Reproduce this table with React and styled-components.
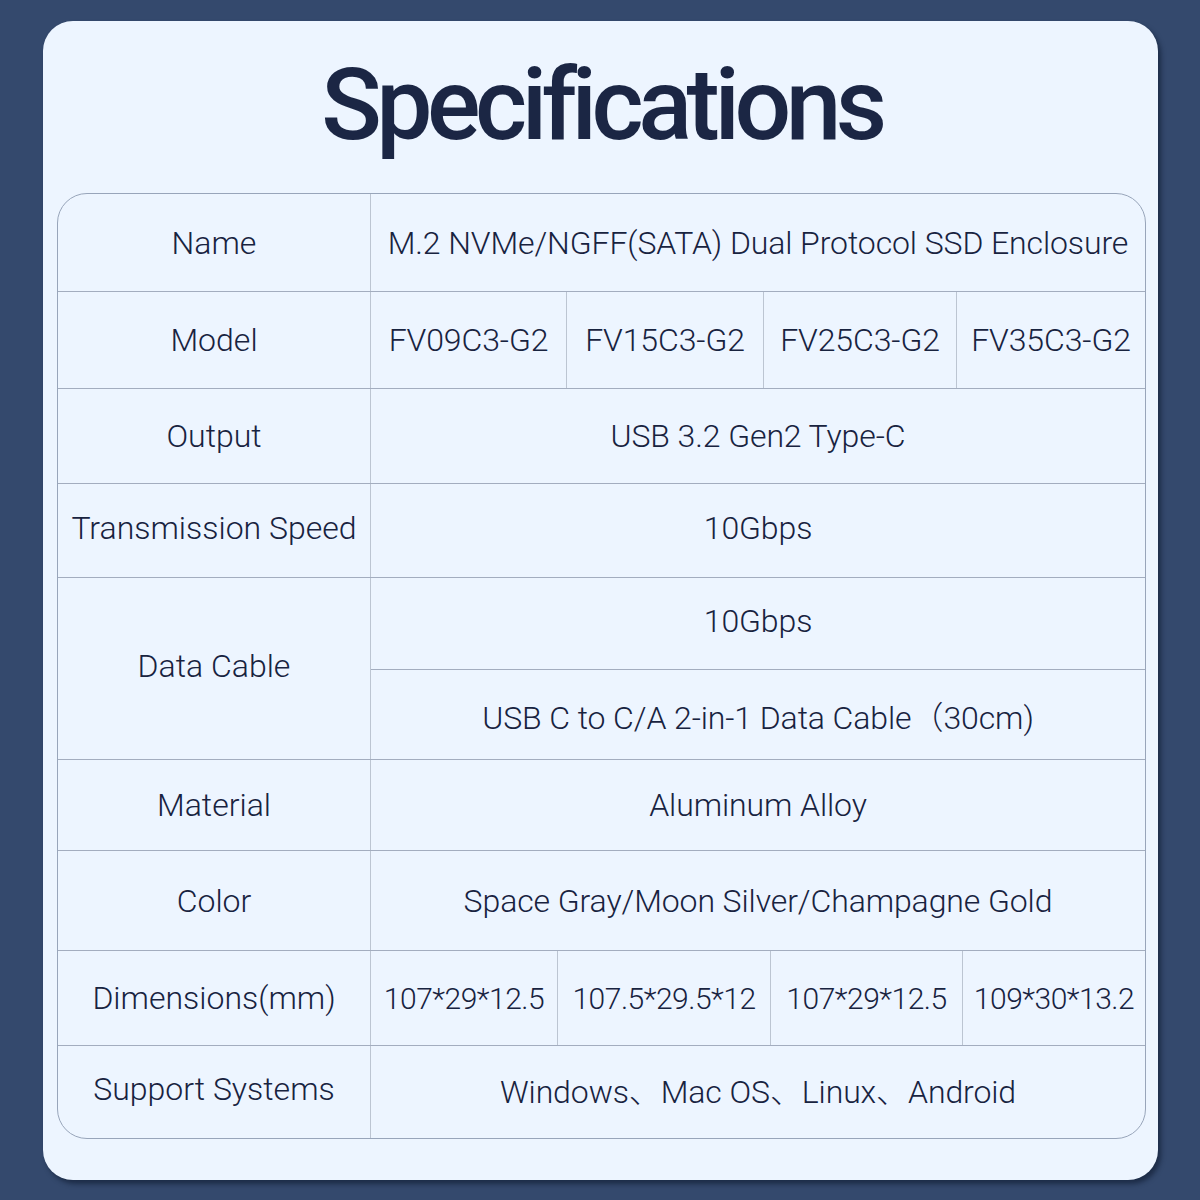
import React from "react";
import styled, { createGlobalStyle } from "styled-components";

const GlobalStyle = createGlobalStyle`
  html, body {
    margin: 0;
    padding: 0;
    background: #34496d;
  }
  body {
    font-family: Roboto, "Noto Sans", "Noto Sans CJK SC", sans-serif;
    color: #1c2747;
  }
`;

const Page = styled.div`
  width: 1200px;
  height: 1200px;
  padding: 21px 42px 20px 43px;
  box-sizing: border-box;
  background: #34496d;
`;

const Card = styled.div`
  height: 100%;
  background: #edf5ff;
  border-radius: 30px;
  box-shadow: 3px 4px 5px rgba(10, 20, 40, 0.55);
  padding: 0 12px 0 14px;
  box-sizing: border-box;
  display: flex;
  flex-direction: column;
`;

const Title = styled.h1`
  margin: 0;
  height: 172px;
  display: flex;
  align-items: center;
  justify-content: center;
  font-size: 100px;
  font-weight: 500;
  letter-spacing: -5.5px;
  color: #1b2644;
  padding-bottom: 6px;
  box-sizing: border-box;
`;

const Table = styled.div`
  border: 1px solid #98a5ba;
  border-radius: 30px;
  overflow: hidden;
  display: flex;
  flex-direction: column;
`;

const Row = styled.div`
  display: flex;
  height: ${(p) => p.h}px;
  border-bottom: ${(p) => (p.last ? "none" : "1.5px solid #a3adbf")};
  box-sizing: border-box;
`;

const Label = styled.div`
  width: 313px;
  flex-shrink: 0;
  display: flex;
  align-items: center;
  justify-content: center;
  padding-bottom: ${(p) => (p.lift ? "6px" : "0")};
  box-sizing: border-box;
  font-size: 32px;
  font-weight: 300;
  color: #18233f;
  border-right: 1px solid #bcc5d2;
  white-space: nowrap;
`;

const Values = styled.div`
  flex: 1;
  display: flex;
  flex-direction: ${(p) => (p.stack ? "column" : "row")};
`;

const Cell = styled.div`
  width: ${(p) => (p.w ? `${p.w}px` : "auto")};
  flex: ${(p) => (p.w ? "none" : p.grow || 1)};
  display: flex;
  align-items: center;
  justify-content: center;
  padding-bottom: ${(p) => (p.lift ? "6px" : "0")};
  font-size: ${(p) => (p.compact ? "30px" : "32px")};
  letter-spacing: ${(p) => (p.compact ? "-0.5px" : "-0.1px")};
  font-weight: 300;
  color: #18233f;
  white-space: nowrap;
  box-sizing: border-box;
  border-right: ${(p) => (p.divider ? "1.5px solid #bcc5d2" : "none")};
  border-bottom: ${(p) => (p.under ? "1.5px solid #a3adbf" : "none")};
`;

const rows = [
  { label: "Name", h: 98, values: ["M.2 NVMe/NGFF(SATA) Dual Protocol SSD Enclosure"] },
  {
    label: "Model",
    h: 97,
    values: ["FV09C3-G2", "FV15C3-G2", "FV25C3-G2", "FV35C3-G2"],
    widths: [196, 197, 193, null],
  },
  { label: "Output", h: 95, values: ["USB 3.2 Gen2 Type-C"] },
  { label: "Transmission Speed", h: 94, lift: true, values: ["10Gbps"] },
  {
    label: "Data Cable",
    h: 182,
    stack: true,
    lift: true,
    values: ["10Gbps", "USB C to C/A 2-in-1 Data Cable（30cm)"],
    grows: [89, 93],
  },
  { label: "Material", h: 91, values: ["Aluminum Alloy"] },
  { label: "Color", h: 100, values: ["Space Gray/Moon Silver/Champagne Gold"] },
  {
    label: "Dimensions(mm)",
    h: 95,
    compact: true,
    values: ["107*29*12.5", "107.5*29.5*12", "107*29*12.5", "109*30*13.2"],
    widths: [187, 213, 192, null],
  },
  { label: "Support Systems", h: 92, lift: true, values: ["Windows、Mac OS、Linux、Android"] },
];

export default function App() {
  return (
    <Page>
      <GlobalStyle />
      <Card>
        <Title>Specifications</Title>
        <Table>
          {rows.map((row, i) => (
            <Row key={row.label} h={row.h} last={i === rows.length - 1}>
              <Label lift={row.lift}>{row.label}</Label>
              <Values stack={row.stack}>
                {row.values.map((v, j) => (
                  <Cell
                    key={j}
                    w={row.widths ? row.widths[j] : null}
                    grow={row.grows ? row.grows[j] : null}
                    lift={row.lift && j === 0}
                    compact={row.compact}
                    divider={row.widths && j < row.values.length - 1}
                    under={row.stack && j === 0}
                  >
                    {v}
                  </Cell>
                ))}
              </Values>
            </Row>
          ))}
        </Table>
      </Card>
    </Page>
  );
}
